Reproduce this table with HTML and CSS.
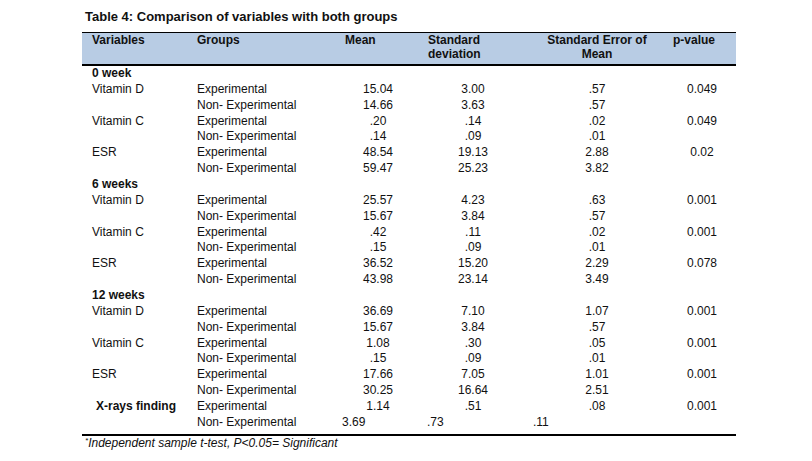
FILE: index.html
```html
<!DOCTYPE html>
<html>
<head>
    <title>Table 4</title>
    <link rel="stylesheet" href="styles.css">
</head>
<body>
    <div class="page">
        <h1 class="title">Table 4: Comparison of variables with both groups</h1>
        <table class="stats">
            <colgroup>
                <col class="c-var">
                <col class="c-group">
                <col class="c-mean">
                <col class="c-sd">
                <col class="c-sem">
                <col class="c-p">
            </colgroup>
            <thead>
                <tr>
                    <th class="h-var">Variables</th>
                    <th class="h-group">Groups</th>
                    <th class="h-mean">Mean</th>
                    <th class="h-sd">Standard<br>deviation</th>
                    <th class="h-sem">Standard Error of<br>Mean</th>
                    <th class="h-p">p-value</th>
                </tr>
            </thead>
            <tbody>
                <tr class="week"><td class="var">0 week</td><td></td><td></td><td></td><td></td><td></td></tr>
                <tr><td class="var">Vitamin D</td><td class="group">Experimental</td><td class="num">15.04</td><td class="num">3.00</td><td class="num">.57</td><td class="num">0.049</td></tr>
                <tr><td class="var"></td><td class="group">Non- Experimental</td><td class="num">14.66</td><td class="num">3.63</td><td class="num">.57</td><td class="num"></td></tr>
                <tr><td class="var">Vitamin C</td><td class="group">Experimental</td><td class="num">.20</td><td class="num">.14</td><td class="num">.02</td><td class="num">0.049</td></tr>
                <tr><td class="var"></td><td class="group">Non- Experimental</td><td class="num">.14</td><td class="num">.09</td><td class="num">.01</td><td class="num"></td></tr>
                <tr><td class="var">ESR</td><td class="group">Experimental</td><td class="num">48.54</td><td class="num">19.13</td><td class="num">2.88</td><td class="num">0.02</td></tr>
                <tr><td class="var"></td><td class="group">Non- Experimental</td><td class="num">59.47</td><td class="num">25.23</td><td class="num">3.82</td><td class="num"></td></tr>

                <tr class="week"><td class="var">6 weeks</td><td></td><td></td><td></td><td></td><td></td></tr>
                <tr><td class="var">Vitamin D</td><td class="group">Experimental</td><td class="num">25.57</td><td class="num">4.23</td><td class="num">.63</td><td class="num">0.001</td></tr>
                <tr><td class="var"></td><td class="group">Non- Experimental</td><td class="num">15.67</td><td class="num">3.84</td><td class="num">.57</td><td class="num"></td></tr>
                <tr><td class="var">Vitamin C</td><td class="group">Experimental</td><td class="num">.42</td><td class="num">.11</td><td class="num">.02</td><td class="num">0.001</td></tr>
                <tr><td class="var"></td><td class="group">Non- Experimental</td><td class="num">.15</td><td class="num">.09</td><td class="num">.01</td><td class="num"></td></tr>
                <tr><td class="var">ESR</td><td class="group">Experimental</td><td class="num">36.52</td><td class="num">15.20</td><td class="num">2.29</td><td class="num">0.078</td></tr>
                <tr><td class="var"></td><td class="group">Non- Experimental</td><td class="num">43.98</td><td class="num">23.14</td><td class="num">3.49</td><td class="num"></td></tr>

                <tr class="week"><td class="var">12 weeks</td><td></td><td></td><td></td><td></td><td></td></tr>
                <tr><td class="var">Vitamin D</td><td class="group">Experimental</td><td class="num">36.69</td><td class="num">7.10</td><td class="num">1.07</td><td class="num">0.001</td></tr>
                <tr><td class="var"></td><td class="group">Non- Experimental</td><td class="num">15.67</td><td class="num">3.84</td><td class="num">.57</td><td class="num"></td></tr>
                <tr><td class="var">Vitamin C</td><td class="group">Experimental</td><td class="num">1.08</td><td class="num">.30</td><td class="num">.05</td><td class="num">0.001</td></tr>
                <tr><td class="var"></td><td class="group">Non- Experimental</td><td class="num">.15</td><td class="num">.09</td><td class="num">.01</td><td class="num"></td></tr>
                <tr><td class="var">ESR</td><td class="group">Experimental</td><td class="num">17.66</td><td class="num">7.05</td><td class="num">1.01</td><td class="num">0.001</td></tr>
                <tr><td class="var"></td><td class="group">Non- Experimental</td><td class="num">30.25</td><td class="num">16.64</td><td class="num">2.51</td><td class="num"></td></tr>

                <tr><td class="var xray">X-rays finding</td><td class="group">Experimental</td><td class="num">1.14</td><td class="num">.51</td><td class="num">.08</td><td class="num">0.001</td></tr>
                <tr class="last-row"><td class="var"></td><td class="group">Non- Experimental</td><td class="loose mean-loose">3.69</td><td class="loose">.73</td><td class="loose">.11</td><td class="num"></td></tr>
            </tbody>
        </table>
        <p class="note"><sup>*</sup>Independent sample t-test, P&lt;0.05= Significant</p>
    </div>
</body>
</html>
```

FILE: styles.css
```css
body {
    margin: 0;
    background-color: #ffffff;
    font-family: "Liberation Sans", Arial, sans-serif;
    color: #111111;
}
.page {
    padding: 9px 0 0 82px;
    width: 654px;
}
.title {
    font-size: 13px;
    font-weight: bold;
    line-height: 16px;
    margin: 0 0 7px 3px;
}
.stats {
    border-collapse: collapse;
    table-layout: fixed;
    width: 654px;
    font-size: 12px;
}
.c-var { width: 106px; }
.c-group { width: 148px; }
.c-mean { width: 84px; }
.c-sd { width: 106px; }
.c-sem { width: 142px; }
.c-p { width: 68px; }

.stats th {
    background-color: #b8cce4;
    font-weight: bold;
    text-align: left;
    vertical-align: top;
    line-height: 14px;
    padding: 0 0 3px 0;
    border-top: 1px solid #000000;
    border-bottom: 2px solid #000000;
}
.h-var { padding-left: 10px !important; }
.h-group { padding-left: 9px !important; }
.h-mean { padding-left: 9px !important; }
.h-sd { padding-left: 8px !important; }
.h-sem { text-align: center !important; }
.h-p { padding-left: 5px !important; }

.stats td {
    line-height: 15.86px;
    padding: 0;
    white-space: nowrap;
}
.stats td.var {
    padding-left: 10px;
}
.stats td.group {
    padding-left: 9px;
}
.stats td.num {
    text-align: center;
}
.week td,
.stats td.xray {
    font-weight: bold;
}
.stats td.xray {
    padding-left: 14px;
}
.stats td.loose {
    text-align: left;
    padding-left: 7px;
}
.stats td.mean-loose {
    padding-left: 6px;
}
.last-row td {
    padding-bottom: 3px;
    border-bottom: 2px solid #000000;
}
.note {
    margin: 0;
    padding-left: 3px;
    font-size: 12px;
    font-style: italic;
    line-height: 14px;
}
.note sup {
    font-size: 8px;
    line-height: 0;
    vertical-align: 4px;
}
```
